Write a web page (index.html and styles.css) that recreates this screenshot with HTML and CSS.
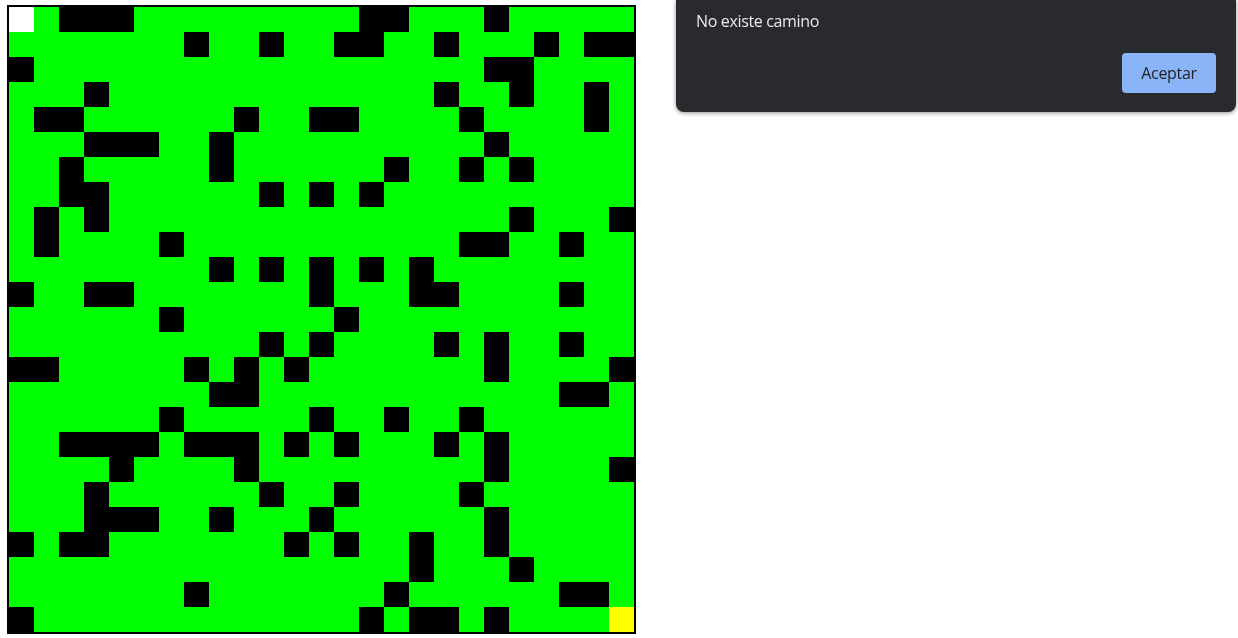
FILE: index.html
```html
<!DOCTYPE html>
<html lang="es">
<head>
<meta charset="utf-8">
<title>Laberinto</title>
<link rel="stylesheet" href="styles.css">
</head>
<body>
<div class="maze">
<div class="row"><i class="s"></i><i></i><i class="w"></i><i class="w"></i><i class="w"></i><i></i><i></i><i></i><i></i><i></i><i></i><i></i><i></i><i></i><i class="w"></i><i class="w"></i><i></i><i></i><i></i><i class="w"></i><i></i><i></i><i></i><i></i><i></i></div>
<div class="row"><i></i><i></i><i></i><i></i><i></i><i></i><i></i><i class="w"></i><i></i><i></i><i class="w"></i><i></i><i></i><i class="w"></i><i class="w"></i><i></i><i></i><i class="w"></i><i></i><i></i><i></i><i class="w"></i><i></i><i class="w"></i><i class="w"></i></div>
<div class="row"><i class="w"></i><i></i><i></i><i></i><i></i><i></i><i></i><i></i><i></i><i></i><i></i><i></i><i></i><i></i><i></i><i></i><i></i><i></i><i></i><i class="w"></i><i class="w"></i><i></i><i></i><i></i><i></i></div>
<div class="row"><i></i><i></i><i></i><i class="w"></i><i></i><i></i><i></i><i></i><i></i><i></i><i></i><i></i><i></i><i></i><i></i><i></i><i></i><i class="w"></i><i></i><i></i><i class="w"></i><i></i><i></i><i class="w"></i><i></i></div>
<div class="row"><i></i><i class="w"></i><i class="w"></i><i></i><i></i><i></i><i></i><i></i><i></i><i class="w"></i><i></i><i></i><i class="w"></i><i class="w"></i><i></i><i></i><i></i><i></i><i class="w"></i><i></i><i></i><i></i><i></i><i class="w"></i><i></i></div>
<div class="row"><i></i><i></i><i></i><i class="w"></i><i class="w"></i><i class="w"></i><i></i><i></i><i class="w"></i><i></i><i></i><i></i><i></i><i></i><i></i><i></i><i></i><i></i><i></i><i class="w"></i><i></i><i></i><i></i><i></i><i></i></div>
<div class="row"><i></i><i></i><i class="w"></i><i></i><i></i><i></i><i></i><i></i><i class="w"></i><i></i><i></i><i></i><i></i><i></i><i></i><i class="w"></i><i></i><i></i><i class="w"></i><i></i><i class="w"></i><i></i><i></i><i></i><i></i></div>
<div class="row"><i></i><i></i><i class="w"></i><i class="w"></i><i></i><i></i><i></i><i></i><i></i><i></i><i class="w"></i><i></i><i class="w"></i><i></i><i class="w"></i><i></i><i></i><i></i><i></i><i></i><i></i><i></i><i></i><i></i><i></i></div>
<div class="row"><i></i><i class="w"></i><i></i><i class="w"></i><i></i><i></i><i></i><i></i><i></i><i></i><i></i><i></i><i></i><i></i><i></i><i></i><i></i><i></i><i></i><i></i><i class="w"></i><i></i><i></i><i></i><i class="w"></i></div>
<div class="row"><i></i><i class="w"></i><i></i><i></i><i></i><i></i><i class="w"></i><i></i><i></i><i></i><i></i><i></i><i></i><i></i><i></i><i></i><i></i><i></i><i class="w"></i><i class="w"></i><i></i><i></i><i class="w"></i><i></i><i></i></div>
<div class="row"><i></i><i></i><i></i><i></i><i></i><i></i><i></i><i></i><i class="w"></i><i></i><i class="w"></i><i></i><i class="w"></i><i></i><i class="w"></i><i></i><i class="w"></i><i></i><i></i><i></i><i></i><i></i><i></i><i></i><i></i></div>
<div class="row"><i class="w"></i><i></i><i></i><i class="w"></i><i class="w"></i><i></i><i></i><i></i><i></i><i></i><i></i><i></i><i class="w"></i><i></i><i></i><i></i><i class="w"></i><i class="w"></i><i></i><i></i><i></i><i></i><i class="w"></i><i></i><i></i></div>
<div class="row"><i></i><i></i><i></i><i></i><i></i><i></i><i class="w"></i><i></i><i></i><i></i><i></i><i></i><i></i><i class="w"></i><i></i><i></i><i></i><i></i><i></i><i></i><i></i><i></i><i></i><i></i><i></i></div>
<div class="row"><i></i><i></i><i></i><i></i><i></i><i></i><i></i><i></i><i></i><i></i><i class="w"></i><i></i><i class="w"></i><i></i><i></i><i></i><i></i><i class="w"></i><i></i><i class="w"></i><i></i><i></i><i class="w"></i><i></i><i></i></div>
<div class="row"><i class="w"></i><i class="w"></i><i></i><i></i><i></i><i></i><i></i><i class="w"></i><i></i><i class="w"></i><i></i><i class="w"></i><i></i><i></i><i></i><i></i><i></i><i></i><i></i><i class="w"></i><i></i><i></i><i></i><i></i><i class="w"></i></div>
<div class="row"><i></i><i></i><i></i><i></i><i></i><i></i><i></i><i></i><i class="w"></i><i class="w"></i><i></i><i></i><i></i><i></i><i></i><i></i><i></i><i></i><i></i><i></i><i></i><i></i><i class="w"></i><i class="w"></i><i></i></div>
<div class="row"><i></i><i></i><i></i><i></i><i></i><i></i><i class="w"></i><i></i><i></i><i></i><i></i><i></i><i class="w"></i><i></i><i></i><i class="w"></i><i></i><i></i><i class="w"></i><i></i><i></i><i></i><i></i><i></i><i></i></div>
<div class="row"><i></i><i></i><i class="w"></i><i class="w"></i><i class="w"></i><i class="w"></i><i></i><i class="w"></i><i class="w"></i><i class="w"></i><i></i><i class="w"></i><i></i><i class="w"></i><i></i><i></i><i></i><i class="w"></i><i></i><i class="w"></i><i></i><i></i><i></i><i></i><i></i></div>
<div class="row"><i></i><i></i><i></i><i></i><i class="w"></i><i></i><i></i><i></i><i></i><i class="w"></i><i></i><i></i><i></i><i></i><i></i><i></i><i></i><i></i><i></i><i class="w"></i><i></i><i></i><i></i><i></i><i class="w"></i></div>
<div class="row"><i></i><i></i><i></i><i class="w"></i><i></i><i></i><i></i><i></i><i></i><i></i><i class="w"></i><i></i><i></i><i class="w"></i><i></i><i></i><i></i><i></i><i class="w"></i><i></i><i></i><i></i><i></i><i></i><i></i></div>
<div class="row"><i></i><i></i><i></i><i class="w"></i><i class="w"></i><i class="w"></i><i></i><i></i><i class="w"></i><i></i><i></i><i></i><i class="w"></i><i></i><i></i><i></i><i></i><i></i><i></i><i class="w"></i><i></i><i></i><i></i><i></i><i></i></div>
<div class="row"><i class="w"></i><i></i><i class="w"></i><i class="w"></i><i></i><i></i><i></i><i></i><i></i><i></i><i></i><i class="w"></i><i></i><i class="w"></i><i></i><i></i><i class="w"></i><i></i><i></i><i class="w"></i><i></i><i></i><i></i><i></i><i></i></div>
<div class="row"><i></i><i></i><i></i><i></i><i></i><i></i><i></i><i></i><i></i><i></i><i></i><i></i><i></i><i></i><i></i><i></i><i class="w"></i><i></i><i></i><i></i><i class="w"></i><i></i><i></i><i></i><i></i></div>
<div class="row"><i></i><i></i><i></i><i></i><i></i><i></i><i></i><i class="w"></i><i></i><i></i><i></i><i></i><i></i><i></i><i></i><i class="w"></i><i></i><i></i><i></i><i></i><i></i><i></i><i class="w"></i><i class="w"></i><i></i></div>
<div class="row"><i class="w"></i><i></i><i></i><i></i><i></i><i></i><i></i><i></i><i></i><i></i><i></i><i></i><i></i><i></i><i class="w"></i><i></i><i class="w"></i><i class="w"></i><i></i><i class="w"></i><i></i><i></i><i></i><i></i><i class="e"></i></div>
</div>

<div class="dialog" role="alertdialog">
  <p class="dialog-message">No existe camino</p>
  <div class="dialog-actions">
    <button class="dialog-button" type="button">Aceptar</button>
  </div>
</div>
</body>
</html>
```

FILE: styles.css
```css
html, body {
  margin: 0;
  padding: 0;
  background: #ffffff;
}

body {
  font-family: "Open Sans", "Noto Sans", "Liberation Sans", sans-serif;
}

.maze {
  display: flex;
  flex-direction: column;
  width: max-content;
  margin: 5px 0 0 7px;
  border: 2px solid #000000;
  background: #00ff00;
}

.row {
  display: flex;
}

.row i {
  display: block;
  width: 25px;
  height: 25px;
  background: #00ff00;
}

.row i.w {
  background: #000000;
}

.row i.s {
  background: #ffffff;
}

.row i.e {
  background: #ffff00;
}

.dialog {
  position: fixed;
  top: 0;
  left: 676px;
  width: 560px;
  height: 112px;
  box-sizing: border-box;
  padding: 11px 20px 19px 20px;
  display: flex;
  flex-direction: column;
  justify-content: space-between;
  background: #292a2d;
  border-radius: 0 0 8px 8px;
  box-shadow: 0 1px 4px rgba(0, 0, 0, 0.45);
}

.dialog-message {
  margin: 0;
  font-size: 16px;
  line-height: 20px;
  letter-spacing: -0.35px;
  color: #e8eaed;
}

.dialog-actions {
  display: flex;
  justify-content: flex-end;
}

.dialog-button {
  width: 94px;
  height: 40px;
  border: none;
  border-radius: 4px;
  background: #8ab4f8;
  color: #202124;
  font-family: "Open Sans", "Noto Sans", "Liberation Sans", sans-serif;
  font-size: 16px;
  letter-spacing: -0.3px;
  padding: 0;
}
```
